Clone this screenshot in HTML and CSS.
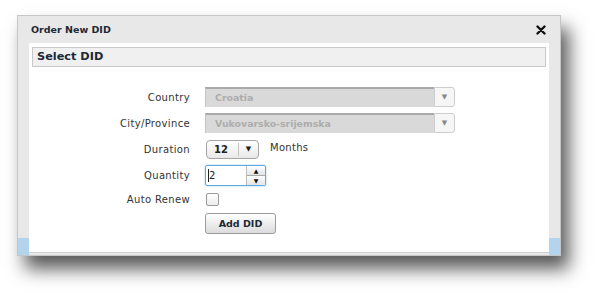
FILE: index.html
```html
<!DOCTYPE html>
<html lang="en">
<head>
    <meta charset="UTF-8">
    <title>Order New DID</title>
    <link rel="stylesheet" href="styles.css">
</head>
<body>
    <div class="page">
        <div class="dialog">
            <div class="titlebar">
                <span class="title">Order New DID</span>
                <svg class="close" width="10" height="10" viewBox="0 0 10 10">
                    <path d="M1.5 1.5 L8.5 8.5 M8.5 1.5 L1.5 8.5" stroke="#111" stroke-width="2.4" stroke-linecap="round"/>
                </svg>
            </div>
            <div class="body">
                <div class="side"></div>
                <div class="content">
                    <div class="section-head">Select DID</div>

                    <div class="form">
                        <label>Country</label>
                        <div class="select wide">
                            <span class="value">Croatia</span>
                            <span class="arrow">&#9660;</span>
                        </div>

                        <label>City/Province</label>
                        <div class="select wide">
                            <span class="value">Vukovarsko-srijemska</span>
                            <span class="arrow">&#9660;</span>
                        </div>

                        <label>Duration</label>
                        <div class="inline">
                            <div class="combo">
                                <span class="num">12</span>
                                <span class="drop">&#9660;</span>
                            </div>
                            <span class="unit">Months</span>
                        </div>

                        <label>Quantity</label>
                        <div class="spin">
                            <span class="spin-val">2</span>
                            <span class="spin-btns">
                                <span class="up">&#9650;</span>
                                <span class="down">&#9660;</span>
                            </span>
                        </div>

                        <label>Auto Renew</label>
                        <div><span class="check"></span></div>

                        <span></span>
                        <div><button class="btn">Add DID</button></div>
                    </div>
                </div>
                <div class="side"></div>
            </div>
        </div>
    </div>
</body>
</html>
```

FILE: styles.css
```css
html, body {
    margin: 0;
    height: 293px;
    background: #fff;
    font-family: "DejaVu Sans", Verdana, sans-serif;
}
.page {
    padding: 15px 0 0 17px;
}
.dialog {
    width: 542px;
    border: 1px solid #c6c6c6;
    background: #e8e8e8;
    box-shadow: 8px 13px 17px rgba(0, 0, 0, 0.65);
}
.titlebar {
    height: 27px;
    display: flex;
    align-items: center;
    justify-content: space-between;
    padding: 0 14px 0 13px;
}
.title {
    font-size: 9.5px;
    font-weight: bold;
    color: #1c2836;
}
.close {
    margin-top: 1px;
}
.body {
    display: flex;
    height: 212px;
}
.side {
    width: 11px;
    background: linear-gradient(to bottom, #e8e8e8 0, #e8e8e8 195px, #b3d4ec 195px);
}
.content {
    flex: 1;
    height: 210px;
    box-sizing: border-box;
    background: #fff;
    border-bottom: 1px solid #cfcfcf;
    padding: 4px 3px 0 3px;
}
.section-head {
    height: 18px;
    line-height: 18px;
    background: #f0f0f0;
    border: 1px solid #c8c8c8;
    padding-left: 4px;
    font-size: 11.3px;
    font-weight: bold;
    color: #1c2836;
}
.form {
    display: grid;
    grid-template-columns: 158px 1fr;
    grid-template-rows: 20px 20px 20px 21px 15px 21px;
    column-gap: 15px;
    row-gap: 6px;
    margin-top: 20px;
    align-items: center;
}
.form label {
    text-align: right;
    font-size: 10px;
    letter-spacing: 0.35px;
    color: #333;
}
.select {
    height: 20px;
    display: flex;
}
.select.wide {
    width: 250px;
}
.select .value {
    flex: 1;
    background: #d9d9d9;
    border-top: 2px solid #a9a9a9;
    border-left: 1px solid #c4c4c4;
    padding-left: 9px;
    line-height: 17px;
    font-size: 9.4px;
    font-weight: bold;
    color: #adadad;
}
.select .arrow {
    width: 19px;
    background: #f6f6f6;
    border: 1px solid #cdcdcd;
    border-radius: 0 3px 3px 0;
    font-size: 7px;
    color: #888;
    text-align: center;
    line-height: 18px;
}
.inline {
    display: flex;
    align-items: center;
}
.combo {
    width: 53px;
    height: 19px;
    margin-left: 1px;
    box-sizing: border-box;
    border: 1px solid #a5a5a5;
    border-radius: 4px;
    background: linear-gradient(#fff, #e9e9e9);
    display: flex;
    align-items: center;
}
.combo .num {
    width: 32px;
    padding-left: 7px;
    box-sizing: border-box;
    border-right: 1px solid #c4c4c4;
    font-size: 10px;
    font-weight: bold;
    color: #222;
    line-height: 13px;
}
.combo .drop {
    flex: 1;
    text-align: center;
    font-size: 7px;
    color: #222;
}
.unit {
    margin-left: 11px;
    margin-top: -3px;
    font-size: 10px;
    letter-spacing: 0.3px;
    color: #333;
}
.spin {
    width: 61px;
    height: 21px;
    box-sizing: border-box;
    border: 1px solid #5fa9e0;
    border-radius: 2px;
    box-shadow: 0 0 2px #8cc6f0;
    display: flex;
}
.spin-val {
    flex: 1;
    border-left: 1px solid #222;
    margin: 3px 0 3px 2px;
    font-size: 10px;
    line-height: 13px;
    color: #222;
}
.spin-btns {
    width: 18px;
    display: flex;
    flex-direction: column;
    border-left: 1px solid #bbb;
    border-radius: 0 3px 3px 0;
    overflow: hidden;
}
.spin-btns span {
    flex: 1;
    background: linear-gradient(#fff, #e4e4e4);
    font-size: 6px;
    color: #111;
    text-align: center;
    line-height: 9px;
}
.spin-btns .up {
    border-bottom: 1px solid #aaa;
}
.check {
    display: block;
    width: 13px;
    height: 13px;
    box-sizing: border-box;
    margin-left: 1px;
    border: 1px solid #9a9a9a;
    border-radius: 2px;
    background: linear-gradient(#fff, #ececec);
}
.btn {
    display: block;
    width: 71px;
    height: 21px;
    padding: 0;
    border: 1px solid #9c9c9c;
    border-radius: 3px;
    background: linear-gradient(#fff, #dcdcdc);
    font-family: "DejaVu Sans", Verdana, sans-serif;
    font-size: 9.5px;
    font-weight: bold;
    color: #1c2836;
    cursor: pointer;
}
```
